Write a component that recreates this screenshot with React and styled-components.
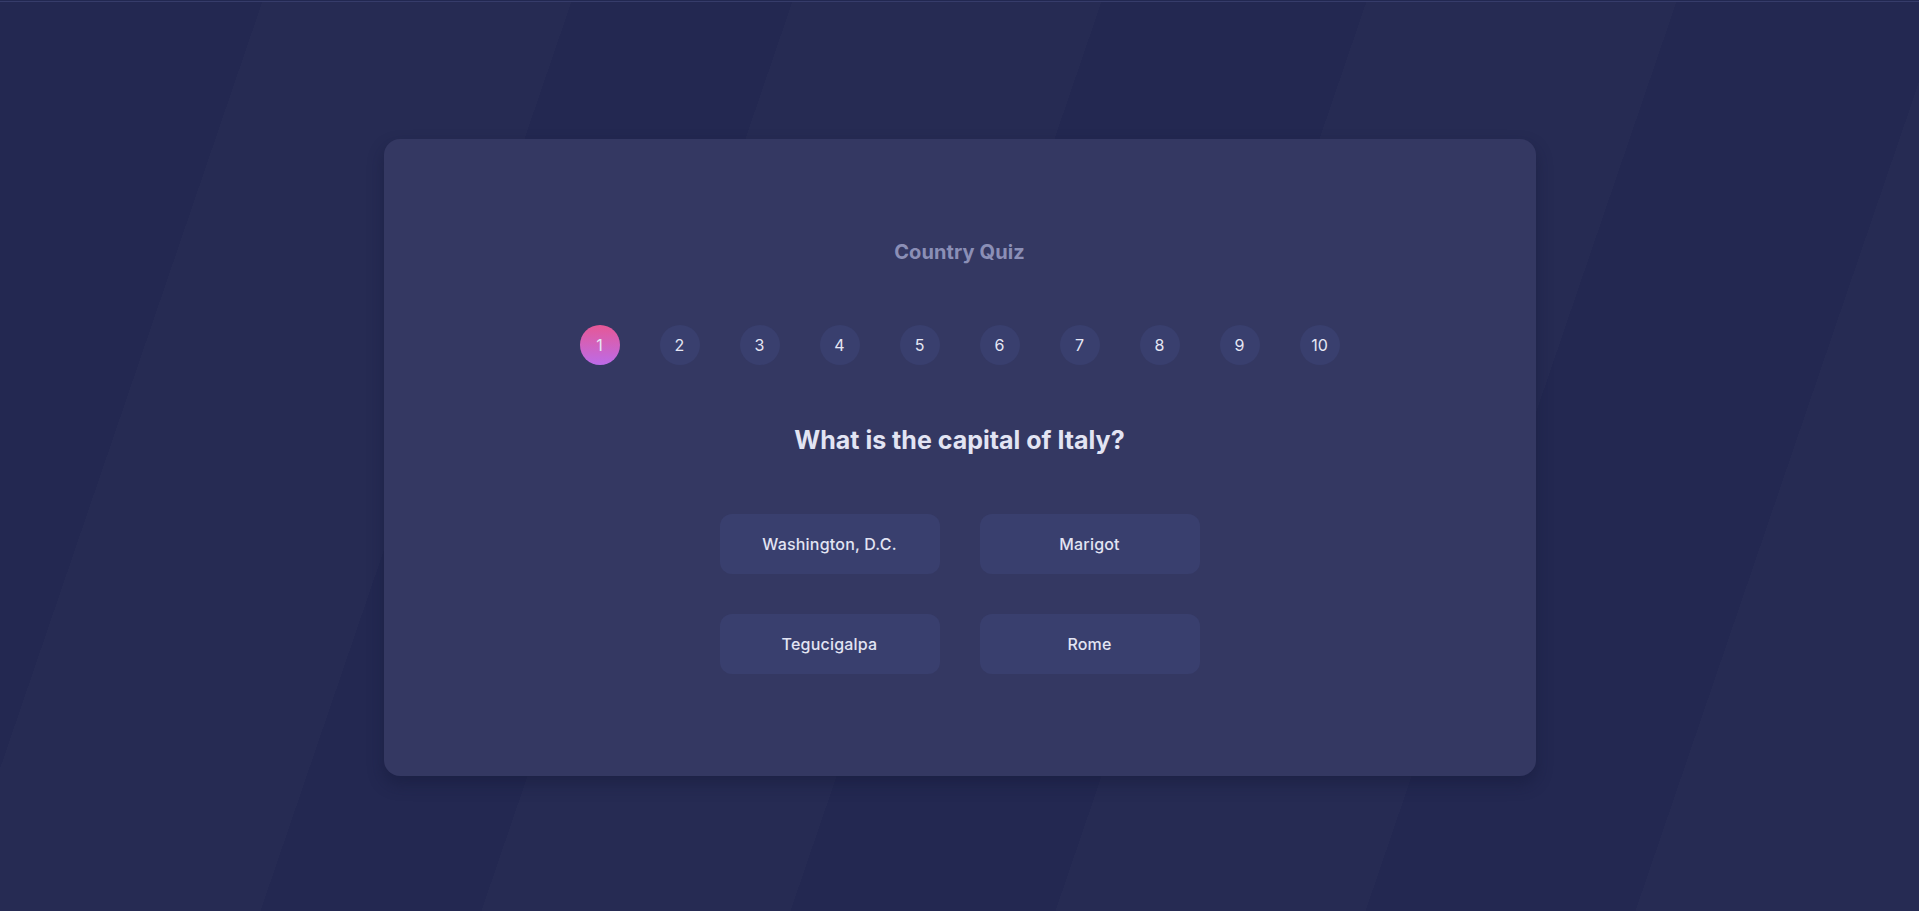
import React from "react";
import styled, { createGlobalStyle } from "styled-components";

const GlobalStyle = createGlobalStyle`
  html, body {
    margin: 0;
    padding: 0;
  }
  body {
    font-family: Inter, "Noto Sans", sans-serif;
    background: #232851;
    overflow: hidden;
  }
  * { box-sizing: border-box; }
`;

const Page = styled.main`
  width: 100vw;
  height: 100vh;
  display: flex;
  flex-direction: column;
  align-items: center;
  justify-content: center;
  padding-top: 4px;
  box-shadow: inset 0 1px 0 #222851, inset 0 2px 0 #363c6a;
  background: linear-gradient(
    108.88deg,
    #232851 0px,
    #232851 248.8px,
    #262b53 248.8px,
    #262b53 541.2px,
    #232851 541.2px,
    #232851 750.3px,
    #262b53 750.3px,
    #262b53 1042.7px,
    #232851 1042.7px,
    #232851 1293.5px,
    #262b53 1293.5px,
    #262b53 1586.8px,
    #232851 1586.8px,
    #232851 1842.3px,
    #262b53 1842.3px
  );
`;

const Card = styled.section`
  width: 1152px;
  height: 637px;
  background: #343862;
  border-radius: 16px;
  box-shadow: 0 8px 16px rgba(20, 24, 56, 0.45);
  display: flex;
  flex-direction: column;
  align-items: center;
  padding-top: 101px;
`;

const Title = styled.h1`
  margin: 0;
  font-size: 20px;
  line-height: 24px;
  font-weight: 700;
  letter-spacing: 0.1px;
  color: #8b8fb6;
`;

const Steps = styled.ol`
  list-style: none;
  margin: 61px 0 0;
  padding: 0;
  display: flex;
  gap: 40px;
`;

const Step = styled.li`
  width: 40px;
  height: 40px;
  border-radius: 50%;
  display: flex;
  align-items: center;
  justify-content: center;
  font-size: 16px;
  color: #e6e7f4;
  background: ${(p) =>
    p.$active ? "linear-gradient(180deg, #e65895 0%, #bc6be8 100%)" : "#393f6e"};
`;

const Question = styled.h2`
  margin: 59px 0 0;
  font-size: 25px;
  line-height: 32px;
  font-weight: 700;
  color: #e2e4f3;
`;

const Options = styled.div`
  margin-top: 58px;
  display: grid;
  grid-template-columns: repeat(2, 220px);
  grid-auto-rows: 60px;
  gap: 40px;
`;

const Option = styled.button`
  border: none;
  border-radius: 12px;
  background: #393f6e;
  color: #e2e4f3;
  font-family: inherit;
  font-size: 16px;
  font-weight: 500;
  letter-spacing: 0.2px;
  cursor: pointer;
`;

const steps = [1, 2, 3, 4, 5, 6, 7, 8, 9, 10];
const options = ["Washington, D.C.", "Marigot", "Tegucigalpa", "Rome"];

export default function App() {
  return (
    <>
      <GlobalStyle />
      <Page>
        <Card>
          <Title>Country Quiz</Title>
          <Steps>
            {steps.map((n) => (
              <Step key={n} $active={n === 1}>
                {n}
              </Step>
            ))}
          </Steps>
          <Question>What is the capital of Italy?</Question>
          <Options>
            {options.map((o) => (
              <Option key={o}>{o}</Option>
            ))}
          </Options>
        </Card>
      </Page>
    </>
  );
}
